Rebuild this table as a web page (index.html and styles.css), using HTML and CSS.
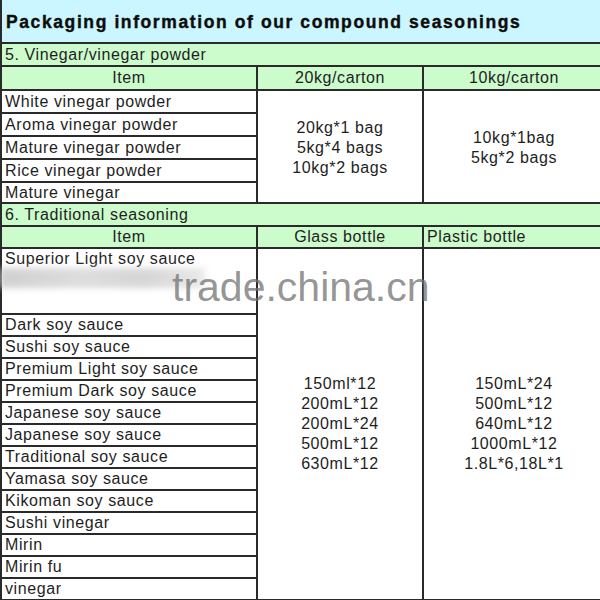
FILE: index.html
```html
<!DOCTYPE html>
<html>
<head>
<meta charset="utf-8">
<link rel="stylesheet" href="styles.css">
</head>
<body>
<div class="page">
  <table class="sheet">
    <colgroup><col class="c1"><col class="c2"><col class="c3"></colgroup>
    <tr class="title"><td colspan="3">Packaging information of our compound seasonings</td></tr>
    <tr class="section"><td colspan="3">5. Vinegar/vinegar powder</td></tr>
    <tr class="head h1"><td class="ctr">Item</td><td class="ctr">20kg/carton</td><td class="ctr">10kg/carton</td></tr>
    <tr class="row r23"><td>White vinegar powder</td>
      <td rowspan="5" class="ctr vals v1">20kg*1 bag<br>5kg*4 bags<br>10kg*2 bags</td>
      <td rowspan="5" class="ctr vals v1">10kg*1bag<br>5kg*2 bags</td></tr>
    <tr class="row r23"><td>Aroma vinegar powder</td></tr>
    <tr class="row r23"><td>Mature vinegar powder</td></tr>
    <tr class="row r23"><td>Rice vinegar powder</td></tr>
    <tr class="row r21"><td>Mature vinegar</td></tr>
    <tr class="section"><td colspan="3">6. Traditional seasoning</td></tr>
    <tr class="head h2"><td class="ctr">Item</td><td class="ctr">Glass bottle</td><td>Plastic bottle</td></tr>
    <tr class="row r65"><td class="top">Superior Light soy sauce</td>
      <td rowspan="14" class="ctr vals">150ml*12<br>200mL*12<br>200mL*24<br>500mL*12<br>630mL*12</td>
      <td rowspan="14" class="ctr vals">150mL*24<br>500mL*12<br>640mL*12<br>1000mL*12<br>1.8L*6,18L*1</td></tr>
    <tr class="row r22"><td>Dark soy sauce</td></tr>
    <tr class="row r22"><td>Sushi soy sauce</td></tr>
    <tr class="row r22"><td>Premium Light soy sauce</td></tr>
    <tr class="row r22"><td>Premium Dark soy sauce</td></tr>
    <tr class="row r22"><td>Japanese soy sauce</td></tr>
    <tr class="row r22"><td>Japanese soy sauce</td></tr>
    <tr class="row r22"><td>Traditional soy sauce</td></tr>
    <tr class="row r22"><td>Yamasa soy sauce</td></tr>
    <tr class="row r22"><td>Kikoman soy sauce</td></tr>
    <tr class="row r22"><td>Sushi vinegar</td></tr>
    <tr class="row r22"><td>Mirin</td></tr>
    <tr class="row r22"><td>Mirin fu</td></tr>
    <tr class="row r22"><td>vinegar</td></tr>
  </table>
  <div class="smear"></div>
  <div class="watermark">trade.china.cn</div>
</div>
</body>
</html>
```

FILE: styles.css
```css
html, body {
  margin: 0;
  padding: 0;
  background: #ffffff;
  overflow: hidden;
}
.page {
  position: relative;
  width: 600px;
  height: 600px;
  overflow: hidden;
  font-family: "Liberation Sans", Arial, sans-serif;
  color: #1e1e1e;
}
.sheet {
  border-collapse: collapse;
  table-layout: fixed;
  width: 604px;
  margin-left: 0;
}
.c1 { width: 256px; }
.c2 { width: 166px; }
.c3 { width: 182px; }
.sheet td {
  border: 2px solid #2a2a2a;
  padding: 0 0 0 3px;
  font-size: 16px;
  letter-spacing: 0.6px;
  line-height: 18px;
  white-space: nowrap;
  vertical-align: middle;
  overflow: hidden;
}
.title td {
  background: #ccf6ff;
  height: 40px;
  border-top: none;
  font-weight: bold;
  font-size: 17.5px;
  letter-spacing: 1.6px;
  padding-left: 4px;
  padding-top: 2px;
  color: #0d0d0d;
  -webkit-text-stroke: 0.4px #0d0d0d;
}
.section td {
  background: #ccfbcc;
  height: 21px;
}
.head td { background: #ccfbcc; }
.h1 td { height: 22px; }
.h2 td { height: 20px; }
.r23 td { height: 21px; }
.r21 td { height: 19px; }
.r22 td { height: 20px; }
.r65 td { height: 63px; }
.sheet td.top { vertical-align: top; padding-top: 1px; }
.sheet td.ctr { text-align: center; padding-left: 0; }
.sheet td.vals {
  background: #ffffff;
  line-height: 20px;
}
.sheet td.v1 { padding-top: 2px; }
.smear {
  position: absolute;
  left: 0;
  top: 268px;
  width: 205px;
  height: 20px;
  background: linear-gradient(90deg, #c8c8c8, #d8d8d8 40%, #cfcfcf 70%, #e6e6e6);
  filter: blur(3px);
  opacity: 0.85;
}
.watermark {
  position: absolute;
  left: 172px;
  top: 263px;
  font-family: "Liberation Sans", Arial, sans-serif;
  font-size: 41px;
  line-height: 48px;
  color: rgba(115, 115, 115, 0.75);
  white-space: nowrap;
}
```
